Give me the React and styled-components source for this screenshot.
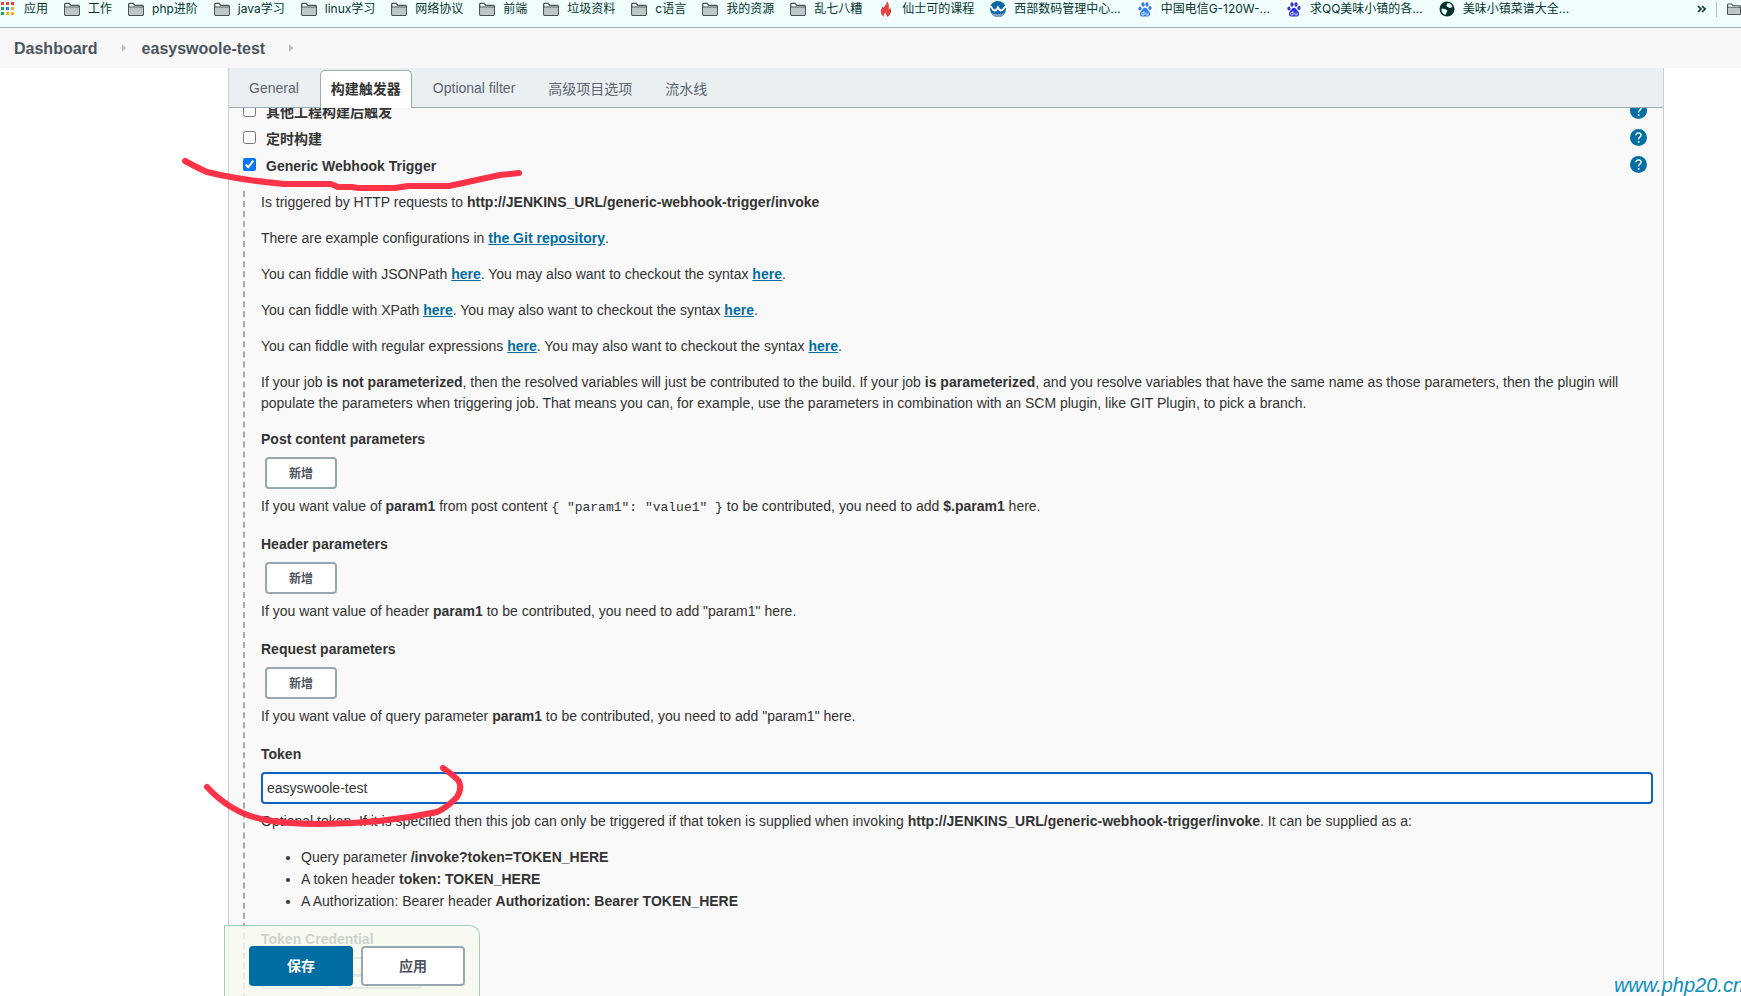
import React from 'react';
import styled, { createGlobalStyle, css } from 'styled-components';

const GlobalStyle = createGlobalStyle`
  * {
    box-sizing: border-box;
  }
  body {
    margin: 0;
    background: #fff;
    color: #333;
    font: 14px/21px "Liberation Sans", "Noto Sans CJK SC", sans-serif;
  }
  button, input {
    font-family: inherit;
  }
`;

const Page = styled.div`
  position: relative;
  display: flex;
  flex-direction: column;
  height: 100vh;
  overflow: hidden;
`;

const BookmarksBar = styled.nav`
  flex: none;
  display: flex;
  gap: 16px;
  padding-bottom: 9px;
  background: #f0fffe;
  border-bottom: 1px solid #a3b5b4;
  overflow: hidden;
`;

const Bookmark = styled.a`
  flex: none;
  display: flex;
  align-items: center;
  gap: 8px;
  height: 18px;
  color: #06332f;
  font: 12px/18px Inter, "Noto Sans CJK SC", sans-serif;
  text-decoration: none;
  white-space: nowrap;
`;

const Overflow = styled.div`
  flex: none;
  display: flex;
  align-items: center;
  gap: 10px;
  width: 44px;
  height: 18px;
  margin-left: auto;
`;

const MoreButton = styled.button`
  padding: 0;
  border: 0;
  background: none;
  line-height: 0;
`;

const Divider = styled.span`
  flex: none;
  width: 1px;
  height: 16px;
  background: #a9c6c4;
`;

const Breadcrumbs = styled.nav`
  flex: none;
  display: flex;
  align-items: center;
  gap: 16px;
  height: 40px;
  padding: 0 14px;
  background: #f8f8f8;
`;

const Crumb = styled.a`
  margin-right: 8px;
  color: #4d545d;
  font-size: 16px;
  font-weight: bold;
  text-decoration: none;
`;

const Panel = styled.main`
  flex: 1;
  min-height: 0;
  display: flex;
  flex-direction: column;
  margin: 0 77px 0 228px;
  background: #f9f9f9;
  border: solid #ccc;
  border-width: 0 1px;
`;

const TabBar = styled.div`
  flex: none;
  display: flex;
  align-items: flex-end;
  height: 40px;
  padding-left: 8px;
  background: #eaeff2;
  border-bottom: 1px solid #9aabb3;
`;

const Tab = styled.button`
  height: 38px;
  margin-bottom: -1px;
  padding: 0 11px 4px;
  border: 1px solid transparent;
  border-bottom: 0;
  border-radius: 5px 5px 0 0;
  background: none;
  color: #5c6470;
  font-size: 14px;
  & + & {
    margin-left: 9px;
  }
  ${({ $active }) => $active && css`
    padding: 0 10px 4px;
    border-color: #9aabb3;
    background: #fff;
    color: #333;
    font-weight: bold;
  `}
`;

const Content = styled.div`
  flex: 1;
  min-height: 0;
  overflow: hidden;
`;

const Triggers = styled.div`
  margin-top: -11px;
`;

const TriggerRow = styled.div`
  display: flex;
  align-items: center;
  height: 27px;
  padding: 0 16px 0 14px;
`;

const Checkbox = styled.input`
  width: 13px;
  height: 13px;
  margin: 0 10px 0 0;
`;

const TriggerLabel = styled.label`
  flex: 1;
  padding-top: 4px;
  font-weight: bold;
`;

const HelpButton = styled.button`
  width: 17px;
  height: 17px;
  padding: 0;
  border: 0;
  background: none;
  line-height: 0;
`;

const Details = styled.div`
  margin: 13px 10px 0 14px;
  padding: 1px 0 60px 16px;
  border-left: 2px dashed #aaa;
`;

const Text = styled.p`
  margin: 0 0 15px;
`;

const Link = styled.a`
  color: #006da3;
  font-weight: bold;
`;

const Code = styled.code`
  font: 13px "Liberation Mono", monospace;
`;

const Field = styled.section`
  display: flex;
  flex-direction: column;
  align-items: flex-start;
  & + & {
    margin-top: 17px;
  }
`;

const FieldLabel = styled.label`
  margin-bottom: 7px;
  font-weight: bold;
`;

const FieldHelp = styled.p`
  margin: 7px 0 0;
`;

const AddButton = styled.button`
  width: 72px;
  height: 32px;
  margin-left: 4px;
  padding: 0 0 2px;
  border: 2px solid #98a8b1;
  border-radius: 4px;
  background: #fff;
  color: #4d545d;
  font-size: 12px;
  font-weight: bold;
`;

const TextInput = styled.input`
  width: 100%;
  height: 32px;
  padding: 0 4px;
  border: 2px solid #0f5fc5;
  border-radius: 4px;
  outline: 0;
  background: #fff;
  color: #333;
  font-size: 14px;
`;

const List = styled.ul`
  margin: 14px 0 0;
  padding-left: 40px;
  line-height: 22px;
`;

const CredentialRow = styled.div`
  display: flex;
  gap: 10px;
`;

const CredentialSelect = styled.select`
  width: 67px;
  height: 32px;
  border: 1px solid #98a8b1;
  border-radius: 4px;
  background: #fff;
`;

const KeyButton = styled.button`
  width: 84px;
  height: 32px;
  padding: 0 12px;
  border: 2px solid #98a8b1;
  border-radius: 4px;
  background: #fff;
  text-align: left;
  line-height: 0;
`;

const ActionBar = styled.div`
  position: absolute;
  left: 224px;
  bottom: 0;
  display: flex;
  gap: 8px;
  padding: 20px 14px 10px 24px;
  border: 1px solid #a5cdb5;
  border-bottom: 0;
  border-radius: 0 10px 0 0;
  background: rgba(245, 250, 239, 0.8);
`;

const ActionButton = styled.button`
  width: 104px;
  height: 40px;
  padding: 0 0 2px;
  border: 2px solid ${({ $primary }) => ($primary ? '#006da3' : '#98a8b1')};
  border-radius: 4px;
  background: ${({ $primary }) => ($primary ? '#006da3' : '#fff')};
  color: ${({ $primary }) => ($primary ? '#fff' : '#4d545d')};
  font-size: 14px;
  font-weight: bold;
`;

const Marker = styled.svg`
  position: absolute;
  left: 0;
  top: 0;
  pointer-events: none;
`;

const Watermark = styled.div`
  position: absolute;
  right: -3px;
  bottom: 0;
  color: #0a8ebb;
  font-size: 20px;
  font-style: italic;
`;

const FolderIcon = () => (
  <svg width="16" height="16" viewBox="0 0 16 16">
    <path d="M.7 13.5V3.2q0-.9.9-.9h3.6l1.6 2h7.6q.9 0 .9.9v8.3q0 .8-.8.8h-13q-.8 0-.8-.8z" fill="#f0fffe" stroke="#47504f" strokeWidth="1.3" />
    <path d="M1.3 6.3h13.4v7.3H1.3z" fill="#bcc8c7" />
    <path d="M1 6h14" stroke="#47504f" />
  </svg>
);

const AppsIcon = () => (
  <svg width="16" height="16" viewBox="0 0 16 16">
    {['#f33c32', '#f33c32', '#f33c32', '#1fa463', '#1a85f5', '#f9ae2b', '#1fa463', '#f9ae2b', '#f9ae2b'].map((fill, i) => (
      <rect key={i} x={1 + (i % 3) * 5} y={1 + Math.floor(i / 3) * 5} width="3" height="3" fill={fill} />
    ))}
  </svg>
);

const FlameIcon = () => (
  <svg width="16" height="16" viewBox="0 0 16 16">
    <path d="M8.7 0c.7 3-2.4 4.600-3 7-.5-.6-.7-1.200-.6-2C2.500 8 1.500 12.500 6 16c-.8-2 .1-3.300 1.300-4.600.2 1.700 1.900 2.100 1.500 4.600C13.300 14 14 10 12 6.200c-.2 1.300-.6 1.900-1.300 2.300C11.200 5 11 2 8.700 0z" fill="#e8423f" />
  </svg>
);

const WaveIcon = () => (
  <svg width="16" height="16" viewBox="0 0 16 16">
    <circle cx="8" cy="8" r="8" fill="#0b66a5" />
    <path d="M1 12q7 2 14 0a8 8 0 0 1-14 0z" fill="#7c9fc0" />
    <path d="M0 5.500q1.500 0 2.200 2T5 9.500q1.500 0 3-3 1.500 3 3 3t2.800-2 2.200-2" fill="none" stroke="#fff" strokeWidth="2" />
  </svg>
);

const PawIcon = ({ color }) => (
  <svg width="16" height="16" viewBox="0 0 16 16">
    <path d="M0 0h16v16H0z" fill="#fff" />
    <g fill={color}>
      <ellipse cx="3" cy="7.500" rx="1.600" ry="2.100" />
      <ellipse cx="6" cy="3.500" rx="1.600" ry="2.300" />
      <ellipse cx="10" cy="3.500" rx="1.600" ry="2.300" />
      <ellipse cx="13" cy="7" rx="1.600" ry="2.100" />
      <path d="M8 6.800c2 0 2.500 2 4 3.400 2 2 1.200 5.300-1.500 5.300H5.500c-2.700 0-3.500-3.300-1.500-5.300C5.500 8.800 6 6.800 8 6.800z" />
    </g>
    <path d="M7 10v4H5.500q-1 0-1-1.200t1-1.200H7M8.800 11.600v1.600q0 .8.800.8h1.400v-2.400" fill="none" stroke="#fff" strokeWidth=".8" />
  </svg>
);

const GlobeIcon = () => (
  <svg width="16" height="16" viewBox="0 0 16 16">
    <circle cx="8" cy="8" r="7.500" fill="#06302d" />
    <path d="M2.500 7.500 6 8l2.500 1.500-1 2.200-1 2.300C3.500 13 2 10.500 2.500 7.500zM8 2.500l3-.3 2.500 3L12 7 9.500 6.500 7.500 5z" fill="#f0fffe" />
  </svg>
);

const HelpIcon = () => (
  <svg width="17" height="17" viewBox="0 0 17 17">
    <circle cx="8.500" cy="8.500" r="8.500" fill="#006da3" />
    <path d="M5.900 6.300q.2-2.400 2.700-2.400 2.500.1 2.500 2.200 0 1.200-1.300 2.100-1.200.8-1.200 2.300" fill="none" stroke="#fff" strokeWidth="1.400" />
    <circle cx="8.600" cy="12.900" r="1" fill="#fff" />
  </svg>
);

const KeyIcon = () => (
  <svg width="16" height="16" viewBox="0 0 16 16">
    <circle cx="9" cy="5" r="3" fill="#f3e14b" />
    <path d="M0 9h9v3H5l-1-1-1 1H0z" fill="#7c99b5" />
  </svg>
);

const CrumbArrow = () => (
  <svg width="4" height="8" viewBox="0 0 4 8">
    <path d="M0 0l4 4-4 4z" fill="#bbb" />
  </svg>
);

const bookmarks = [
  { title: '应用', icon: <AppsIcon /> },
  { title: '工作' },
  { title: 'php进阶' },
  { title: 'java学习' },
  { title: 'linux学习' },
  { title: '网络协议' },
  { title: '前端' },
  { title: '垃圾资料' },
  { title: 'c语言' },
  { title: '我的资源' },
  { title: '乱七八糟' },
  { title: '仙士可的课程', icon: <FlameIcon /> },
  { title: '西部数码管理中心...', icon: <WaveIcon /> },
  { title: '中国电信G-120W-...', icon: <PawIcon color="#2b7cf6" /> },
  { title: '求QQ美味小镇的各...', icon: <PawIcon color="#2a32dc" /> },
  { title: '美味小镇菜谱大全...', icon: <GlobeIcon /> },
];

const tabs = ['General', '构建触发器', 'Optional filter', '高级项目选项', '流水线'];

const triggers = [
  { id: 'upstream', title: '其他工程构建后触发' },
  { id: 'timer', title: '定时构建' },
  { id: 'webhook', title: 'Generic Webhook Trigger', checked: true },
];

const Fiddle = ({ subject }) => (
  <Text>
    You can fiddle with {subject} <Link href="#">here</Link>. You may also want to checkout the syntax <Link href="#">here</Link>.
  </Text>
);

const Parameters = ({ id, title, children }) => (
  <Field>
    <FieldLabel htmlFor={id}>{title}</FieldLabel>
    <AddButton id={id} type="button">新增</AddButton>
    <FieldHelp>{children}</FieldHelp>
  </Field>
);

const App = () => (
  <Page>
    <GlobalStyle />
    <BookmarksBar>
      {bookmarks.map(({ title, icon }) => (
        <Bookmark key={title} href="#">
          {icon || <FolderIcon />}
          {title}
        </Bookmark>
      ))}
      <Overflow>
        <MoreButton type="button" aria-label="More bookmarks">
          <svg width="9" height="8" viewBox="0 0 9 8">
            <path d="M1 1l3 3-3 3M5 1l3 3-3 3" fill="none" stroke="#06332f" strokeWidth="1.600" />
          </svg>
        </MoreButton>
        <Divider />
        <FolderIcon />
      </Overflow>
    </BookmarksBar>
    <Breadcrumbs>
      <Crumb href="#">Dashboard</Crumb>
      <CrumbArrow />
      <Crumb href="#">easyswoole-test</Crumb>
      <CrumbArrow />
    </Breadcrumbs>
    <Panel>
      <TabBar>
        {tabs.map((tab, i) => (
          <Tab key={tab} type="button" $active={i === 1}>{tab}</Tab>
        ))}
      </TabBar>
      <Content>
        <Triggers>
          {triggers.map(({ id, title, checked }) => (
            <TriggerRow key={id}>
              <Checkbox id={id} type="checkbox" defaultChecked={checked} />
              <TriggerLabel htmlFor={id}>{title}</TriggerLabel>
              <HelpButton type="button" aria-label="Help"><HelpIcon /></HelpButton>
            </TriggerRow>
          ))}
        </Triggers>
        <Details>
          <Text>Is triggered by HTTP requests to <b>http://JENKINS_URL/generic-webhook-trigger/invoke</b></Text>
          <Text>There are example configurations in <Link href="#">the Git repository</Link>.</Text>
          <Fiddle subject="JSONPath" />
          <Fiddle subject="XPath" />
          <Fiddle subject="regular expressions" />
          <Text>
            If your job <b>is not parameterized</b>, then the resolved variables will just be contributed to the build.
            If your job <b>is parameterized</b>, and you resolve variables that have the same name as those parameters,
            then the plugin will populate the parameters when triggering job. That means you can, for example, use the
            parameters in combination with an SCM plugin, like GIT Plugin, to pick a branch.
          </Text>
          <Parameters id="post" title="Post content parameters">
            If you want value of <b>param1</b> from post content <Code>{'{ "param1": "value1" }'}</Code> to be
            contributed, you need to add <b>$.param1</b> here.
          </Parameters>
          <Parameters id="header" title="Header parameters">
            If you want value of header <b>param1</b> to be contributed, you need to add "param1" here.
          </Parameters>
          <Parameters id="request" title="Request parameters">
            If you want value of query parameter <b>param1</b> to be contributed, you need to add "param1" here.
          </Parameters>
          <Field>
            <FieldLabel htmlFor="token">Token</FieldLabel>
            <TextInput id="token" type="text" defaultValue="easyswoole-test" />
            <FieldHelp>
              Optional token. If it is specified then this job can only be triggered if that token is supplied when
              invoking <b>http://JENKINS_URL/generic-webhook-trigger/invoke</b>. It can be supplied as a:
            </FieldHelp>
            <List>
              <li>Query parameter <b>/invoke?token=TOKEN_HERE</b></li>
              <li>A token header <b>token: TOKEN_HERE</b></li>
              <li>A Authorization: Bearer header <b>Authorization: Bearer TOKEN_HERE</b></li>
            </List>
          </Field>
          <Field>
            <FieldLabel htmlFor="credential">Token Credential</FieldLabel>
            <CredentialRow>
              <CredentialSelect id="credential" />
              <KeyButton type="button" aria-label="Add credential"><KeyIcon /></KeyButton>
            </CredentialRow>
          </Field>
        </Details>
      </Content>
    </Panel>
    <ActionBar>
      <ActionButton type="button" $primary>保存</ActionButton>
      <ActionButton type="button">应用</ActionButton>
    </ActionBar>
    <Marker width="560" height="840" viewBox="0 0 560 840" fill="none" stroke="#ff3347" strokeWidth="6" strokeLinecap="round" strokeLinejoin="round">
      <path d="M185 161Q198 168 207 172Q240 180 284 184H331L338 187H352L358 188H395L408 186H449L500 175L519 173" />
      <path d="M207 787Q230 812 261 819Q285 824 320 824Q380 824 437 812Q448 807 457 797Q463 787 458 780Q452 774 443 768" />
    </Marker>
    <Watermark>www.php20.cn</Watermark>
  </Page>
);

export default App;
